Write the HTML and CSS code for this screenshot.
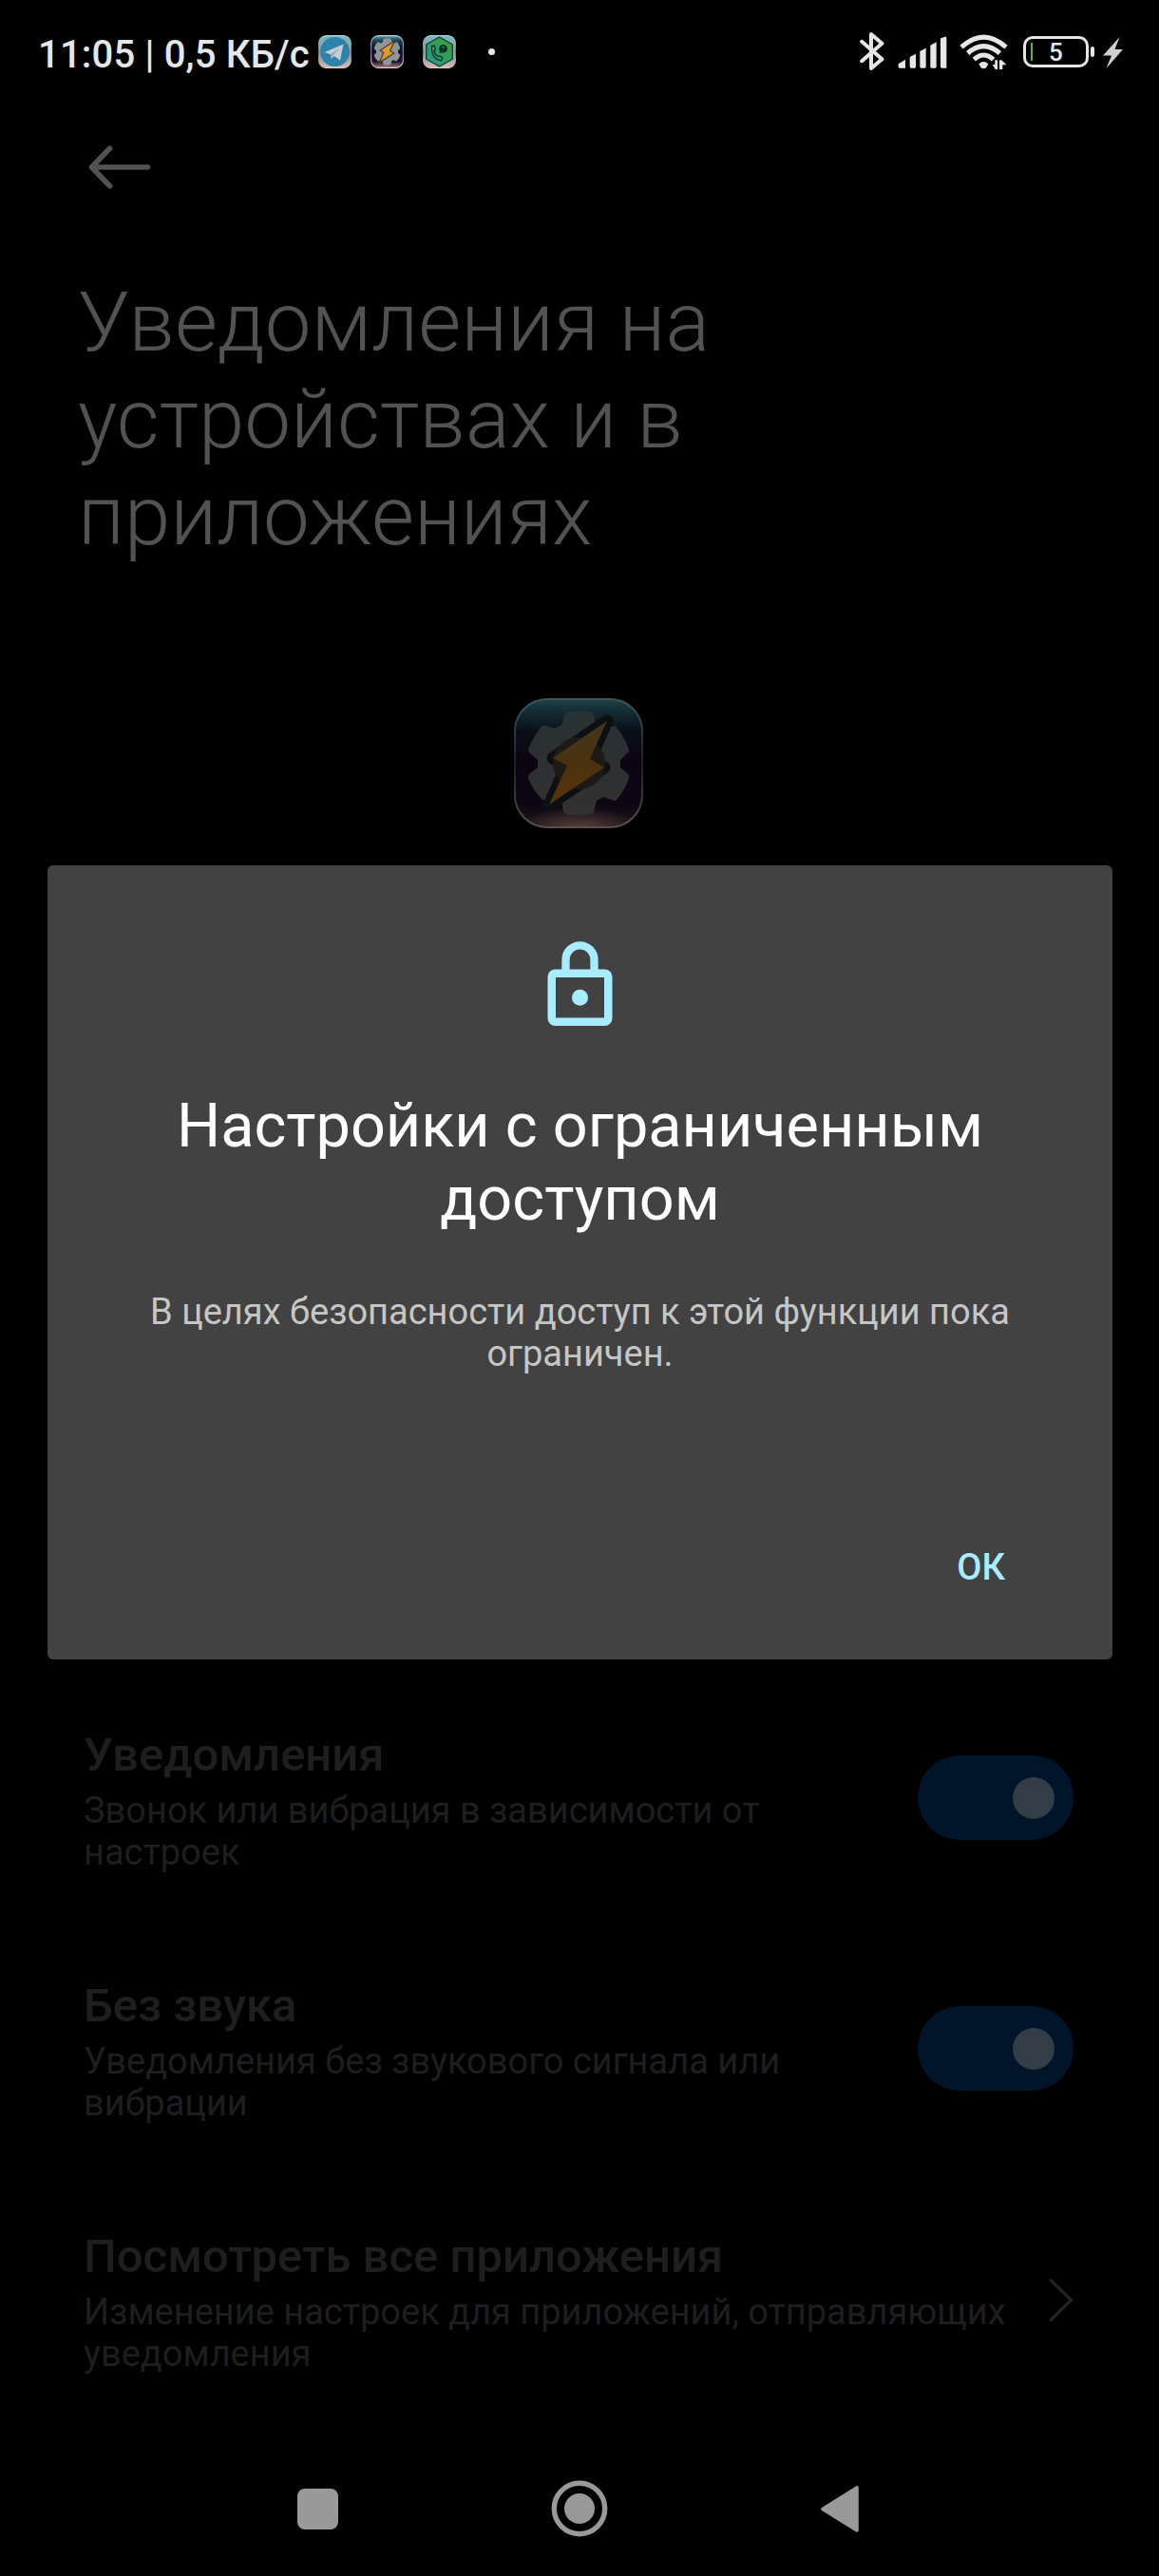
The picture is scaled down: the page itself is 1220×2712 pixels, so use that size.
FILE: index.html
```html
<!DOCTYPE html>
<html lang="ru">
<head>
<meta charset="utf-8">
<title>Уведомления на устройствах и в приложениях</title>
<link rel="stylesheet" href="styles.css">
</head>
<body>
<svg class="defs" width="0" height="0" aria-hidden="true">
  <defs>
    <linearGradient id="tile-dark" x1="0" y1="0" x2="0" y2="1">
      <stop offset="0" stop-color="#5aa9ad"/><stop offset=".12" stop-color="#2b5060"/><stop offset=".32" stop-color="#151633"/>
      <stop offset=".5" stop-color="#1c0a2c"/><stop offset=".8" stop-color="#1f1030"/><stop offset="1" stop-color="#a88078"/>
    </linearGradient>
    <linearGradient id="tile-light" x1="0" y1="0" x2="0" y2="1">
      <stop offset="0" stop-color="#6fb9bd"/><stop offset=".3" stop-color="#8fa9ad"/>
      <stop offset=".75" stop-color="#a4a4a8"/><stop offset="1" stop-color="#dcb9b0"/>
    </linearGradient>
    <linearGradient id="rim" x1="0" y1="0" x2="0" y2="1">
      <stop offset="0" stop-color="#9fdfe2"/><stop offset=".5" stop-color="#6f6a80"/><stop offset="1" stop-color="#e6cbc6"/>
    </linearGradient>
    <linearGradient id="hex" x1="0" y1="1" x2="1" y2="0">
      <stop offset="0" stop-color="#1f9a8c"/><stop offset="1" stop-color="#3f9f35"/>
    </linearGradient>
    <linearGradient id="app-bg" x1="0" y1="0" x2="0" y2="1">
      <stop offset="0" stop-color="#1f4246"/><stop offset=".1" stop-color="#142b33"/><stop offset=".25" stop-color="#0a1019"/>
      <stop offset=".5" stop-color="#0c0413"/><stop offset=".82" stop-color="#0d0713"/><stop offset="1" stop-color="#1c1418"/>
    </linearGradient>
    <radialGradient id="app-glow" cx=".5" cy="1.02" r=".5" gradientTransform="translate(0 .66) scale(1 .35)">
      <stop offset="0" stop-color="#5a413c"/><stop offset="1" stop-color="#5a413c" stop-opacity="0"/>
    </radialGradient>
    <linearGradient id="app-rim" x1="0" y1="0" x2="0" y2="1">
      <stop offset="0" stop-color="#37585b"/><stop offset=".5" stop-color="#1f1a27"/><stop offset="1" stop-color="#5b4e4d"/>
    </linearGradient>
    <linearGradient id="app-gear" x1="0" y1="0" x2="0" y2="1">
      <stop offset="0" stop-color="#263433"/><stop offset=".4" stop-color="#2d2f31"/><stop offset="1" stop-color="#333232"/>
    </linearGradient>
    <linearGradient id="app-bolt" x1="0" y1="0" x2="0" y2="1">
      <stop offset="0" stop-color="#43361a"/><stop offset=".5" stop-color="#4a3210"/><stop offset="1" stop-color="#553608"/>
    </linearGradient>
  </defs>
</svg>

<div class="screen">
  <header class="status">
    <span class="status-text">11:05 | 0,5 КБ/с</span>
    <div class="notifications">
      <svg width="35" height="35" viewBox="0 0 35 35">
        <rect x=".6" y=".6" width="33.8" height="33.8" rx="8" fill="url(#tile-light)" stroke="url(#rim)" stroke-width="1.2"/>
        <circle cx="17.5" cy="17.5" r="15.5" fill="#2e83ab"/>
        <path d="M6.5 18 26.5 9.5 23 26.5 16.8 22 13.8 24.8 13 20.3Z" fill="#c3cdd3"/>
        <path d="M13 20.3 23 12.8 15.3 21.5 13.8 24.8Z" fill="#8fa9b8"/>
      </svg>
      <svg width="35" height="35" viewBox="0 0 35 35">
        <rect x=".6" y=".6" width="33.8" height="33.8" rx="8" fill="url(#tile-dark)" stroke="url(#rim)" stroke-width="1.2"/>
        <g transform="translate(-.2 -.2) scale(.26)">
          <path d="M53 16Q68 10 84 16L88 30 98 33 108 28Q118 40 121 54L112 64V72L121 82Q118 96 106 107L94 102 86 106 84 120Q68 126 53 120L50 106 42 102 31 107Q18 96 15 82L24 72V64L15 54Q18 40 31 28L42 33 50 30Z" fill="#8e9699"/>
          <path d="M98 24 80 64 96 74 36 112 54 72 40 62Z" fill="#e09a2c" stroke="#4c4030" stroke-width="5"/>
        </g>
      </svg>
      <svg width="35" height="35" viewBox="0 0 35 35">
        <rect x=".6" y=".6" width="33.8" height="33.8" rx="8" fill="url(#tile-light)" stroke="url(#rim)" stroke-width="1.2"/>
        <path d="M17.5 2 31.3 9.8V25.2L17.5 33 3.7 25.2V9.8Z" fill="url(#hex)" stroke="#123a35" stroke-width="1.3"/>
        <path d="M9.5 11.5 12.5 11.2 13.3 15.5 11.8 17Q13 20.8 16.2 22.5L17.8 21.6 20.8 24 19.5 26.8Q9 25.5 9.5 11.5Z" fill="none" stroke="#0c2b22" stroke-width="1.2"/>
        <circle cx="21.5" cy="14.2" r="4.3" fill="#0c2b22"/><path d="M18 16.5 17.4 19 20.5 18Z" fill="#0c2b22"/>
        <path d="M20.4 13.3Q20.6 11.8 22 12.2 23.2 13 21.8 14.5M21.4 16.2V16.9" fill="none" stroke="#40a53c" stroke-width="1"/>
      </svg>
      <span class="more-dot"></span>
    </div>
    <div class="indicators">
      <svg class="bluetooth" width="26" height="42" viewBox="0 0 26 42"><path d="M2.2 10.8 23.4 29.2 12 39V3L23.4 12.8 2.2 31.2" fill="none" stroke="#e6e6e6" stroke-width="4" stroke-linejoin="round" stroke-linecap="round"/></svg>
      <svg class="signal" width="52" height="34" viewBox="0 0 156 102" fill="#e6e6e6">
        <path d="M2 88 24 74V101H6Q2 101 2 97ZM38 66 57 56V97Q57 101 53 101H42Q38 101 38 97ZM70 48 89 38V97Q89 101 85 101H74Q70 101 70 97ZM103 29 122 19V97Q122 101 118 101H107Q103 101 103 97ZM135 9Q135 7 137 6L150 2Q154 1 154 5V101H139Q135 101 135 97Z"/>
      </svg>
      <svg class="wifi" width="51" height="38" viewBox="0 0 153 114">
        <g fill="none" stroke="#e6e6e6" stroke-width="15">
          <path d="M6 41Q76-22 147 41"/><path d="M26 60Q76 16 127 60"/><path d="M46 80Q76 52 107 80"/>
        </g>
        <path d="M61 94Q76 80 91 94L85 105Q76 113 67 105Z" fill="#e6e6e6"/>
        <path d="M120 82V111H113L104 96H112V82ZM126 111V82H133L148 97H136V111Z" fill="#e6e6e6"/>
      </svg>
      <div class="battery"><span class="battery-level"></span><span class="battery-value">5</span></div>
      <span class="battery-cap"></span>
      <svg class="charging" width="21" height="33" viewBox="0 0 21 33"><path d="M17.5 0 0 19.5 9 19.5 3.5 33 21 13 12.5 13Z" fill="#cfcfcf"/></svg>
    </div>
  </header>

  <main class="settings">
    <svg class="back" width="66" height="46" viewBox="0 0 66 46"><path d="M22.5 3.2 3.5 23 22.5 42.8M3.5 23H62.5" fill="none" stroke="#525252" stroke-width="5.6" stroke-linecap="round" stroke-linejoin="round"/></svg>
    <h1 class="page-title">Уведомления на<br>устройствах и в<br>приложениях</h1>
    <svg class="app-icon" width="136" height="137" viewBox="0 0 136 137">
      <rect x="1" y="1" width="134" height="135" rx="34" fill="url(#app-bg)"/>
      <rect x="1" y="1" width="134" height="135" rx="34" fill="url(#app-glow)" stroke="url(#app-rim)" stroke-width="2"/>
      <path d="M53 19Q53 16 56 15Q68 12 81 15Q84 16 84 18L86 28 94 32 103 30Q106 28 108 31Q117 42 121 54Q122 56 120 57L112 65V73L120 80Q122 82 121 84Q117 97 108 107Q106 109 103 107L94 104 87 108 84 119Q84 121 81 122Q68 125 55 122Q53 121 52 119L50 108 42 104 35 107Q32 109 29 106Q20 97 15 84Q15 82 16 80L25 73V65L16 57Q15 56 15 54Q20 41 29 30Q31 28 34 29L43 32 50 28Z" fill="url(#app-gear)"/>
      <path d="M98 24 80 64 95 73 37 112 56 71 41 63Z" fill="none" stroke="#0c1013" stroke-width="13" stroke-linejoin="round"/>
      <circle cx="68.5" cy="68.5" r="27.500" fill="#1c1917"/>
      <path d="M98 24 80 64 95 73 37 112 56 71 41 63Z" fill="url(#app-bolt)"/>
    </svg>
    <section class="rows">
      <div class="row">
        <div class="row-text"><h2>Уведомления</h2><p>Звонок или вибрация в зависимости от<br>настроек</p></div>
        <span class="switch"><i></i></span>
      </div>
      <div class="row">
        <div class="row-text"><h2>Без звука</h2><p>Уведомления без звукового сигнала или<br>вибрации</p></div>
        <span class="switch"><i></i></span>
      </div>
      <div class="row">
        <div class="row-text"><h2>Посмотреть все приложения</h2><p>Изменение настроек для приложений, отправляющих<br>уведомления</p></div>
        <svg class="chevron" width="26" height="45" viewBox="0 0 26 45"><path d="M2 1.5 23.5 22.5 2 43.5" fill="none" stroke="#222" stroke-width="3.2" stroke-linecap="round" stroke-linejoin="round"/></svg>
      </div>
    </section>
  </main>

  <nav class="navbar">
    <svg width="43" height="43" viewBox="0 0 43 43"><rect width="43" height="43" rx="8" fill="#999"/></svg>
    <svg width="60" height="60" viewBox="0 0 60 60"><circle cx="30" cy="30" r="26.7" fill="none" stroke="#999" stroke-width="5.4"/><circle cx="30" cy="30" r="16" fill="#999"/></svg>
    <svg width="40" height="49" viewBox="0 0 40 49"><path d="M2 24.5 38 2V47Z" fill="#999" stroke="#999" stroke-width="3.6" stroke-linejoin="round"/></svg>
  </nav>

  <div class="dialog" role="dialog">
    <svg class="lock" width="69" height="90" viewBox="0 0 69 90">
      <path d="M19.500 34V19.300a15 15 0 0 1 30 0V34" fill="none" stroke="#a8ecff" stroke-width="8.300"/>
      <path fill-rule="evenodd" d="M8.500 29.500H60.500a8 8 0 0 1 8 8V81a8 8 0 0 1-8 8H8.500a8 8 0 0 1-8-8V37.500a8 8 0 0 1 8-8ZM9 38V80.500H60V38Z" fill="#a8ecff"/>
      <circle cx="34.500" cy="59.300" r="8.500" fill="#a8ecff"/>
    </svg>
    <h2 class="dialog-title">Настройки с ограниченным<br>доступом</h2>
    <p class="dialog-message">В целях безопасности доступ к этой функции пока<br>ограничен.</p>
    <button class="dialog-ok" type="button">ОК</button>
  </div>
</div>
</body>
</html>
```
FILE: styles.css
```css
* { box-sizing: border-box; margin: 0; padding: 0; }

body { background: #000; font-family: Roboto, "Liberation Sans", sans-serif; }

svg { display: block; flex: none; }
.defs { position: absolute; }

.screen {
  position: relative;
  display: flex;
  flex-direction: column;
  width: 1220px;
  height: 2712px;
  overflow: hidden;
  background: #000;
}

/* Status bar */
.status {
  display: flex;
  align-items: flex-start;
  height: 110px;
  padding: 33px 38px 0 40px;
  color: #e6e6e6;
}
.status-text {
  width: 295px;
  font-size: 40px;
  font-weight: 500;
  line-height: 49px;
  letter-spacing: .17px;
  white-space: nowrap;
}
.notifications { display: flex; align-items: center; gap: 20px; margin-top: 4px; }
.more-dot { width: 7px; height: 7px; margin: -1px 0 0 14px; border-radius: 50%; background: #e6e6e6; }
.indicators { display: flex; margin-left: auto; }
.signal { margin: 5px 0 0 14px; }
.wifi { margin: 3px 0 0 13px; }
.battery {
  display: flex;
  align-items: center;
  width: 69px;
  height: 33px;
  margin: 5px 0 0 16px;
  padding-left: 5px;
  border: 3px solid #e6e6e6;
  border-radius: 10px;
}
.battery-level { width: 2px; height: 19px; background: #5eb12b; }
.battery-value { width: 49px; font-size: 26px; font-weight: 500; line-height: 28px; text-align: center; }
.battery-cap { width: 4px; height: 11px; margin: 16px 0 0 2px; border-radius: 2px; background: #e6e6e6; }
.charging { margin: 6px 0 0 9px; }

/* Settings page */
.settings { display: flex; flex-direction: column; height: 2470px; }
.back { margin: 43px 0 0 93px; }
.page-title {
  margin: 89px 0 0 82px;
  color: #525252;
  font-size: 87px;
  font-weight: 300;
  line-height: 102px;
}
.app-icon { margin: 141px 0 0 541px; }
.rows { margin-top: 892px; }
.row {
  display: flex;
  align-items: flex-start;
  justify-content: space-between;
  height: 264px;
  padding: 55px 90px 0 88px;
}
.row-text { color: #1e1e1e; white-space: nowrap; }
.row-text h2 { font-size: 49px; font-weight: 500; line-height: 57px; }
.row-text p { margin-top: 8px; font-size: 38px; line-height: 44px; }
.switch {
  display: flex;
  align-items: center;
  justify-content: flex-end;
  width: 164px;
  height: 89px;
  margin-top: 29px;
  padding-right: 20px;
  border-radius: 45px;
  background: #001529;
}
.switch i { width: 44px; height: 44px; border-radius: 50%; background: #333d47; }
.chevron { margin-top: 52px; }

/* System navigation */
.navbar {
  display: flex;
  align-items: center;
  justify-content: space-between;
  height: 142px;
  margin-top: -10px;
  padding: 0 316px 0 313px;
}

/* Dialog laid over the page */
.dialog {
  position: absolute;
  top: 911px;
  left: 50px;
  display: flex;
  flex-direction: column;
  align-items: center;
  width: 1121px;
  height: 836px;
  padding-top: 80px;
  border-radius: 6px;
  background: #424242;
  text-align: center;
  white-space: nowrap;
}
.dialog-title {
  margin-top: 66px;
  color: #fff;
  font-size: 64.8px;
  font-weight: 400;
  line-height: 76.5px;
}
.dialog-message { margin-top: 59px; color: #c6c6c6; font-size: 38px; line-height: 44px; }
.dialog-ok {
  align-self: flex-end;
  margin: 181px 113px 0 0;
  border: 0;
  background: none;
  color: #a8ecff;
  font: 500 38px/44px Roboto, sans-serif;
}
```
